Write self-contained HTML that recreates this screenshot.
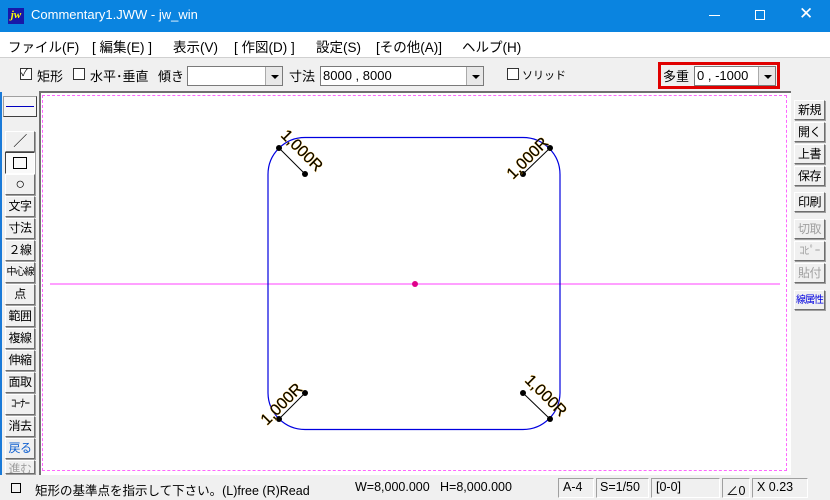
<!DOCTYPE html>
<html><head><meta charset="utf-8"><style>
*{margin:0;padding:0;box-sizing:border-box}
body{width:830px;height:500px;overflow:hidden;background:#f0f0f0;font-family:"Liberation Sans","Noto Sans CJK JP",sans-serif;position:relative;font-size:13px;color:#000;white-space:nowrap}
.abs{position:absolute}
#title{left:0;top:0;width:830px;height:32px;background:#0a84e0;color:#fff}
#menu{left:0;top:32px;width:830px;height:25px;background:#fff;font-size:13.5px}
#menu span{position:absolute;top:4px}
.btn{position:absolute;background:#f0f0f0;border:1px solid;border-color:#fff #6e6e6e #6e6e6e #fff;box-shadow:1px 1px 0 #a0a0a0;font-size:12px;text-align:center;line-height:19px;letter-spacing:-0.5px;overflow:hidden;white-space:nowrap}
.chk{position:absolute;width:12px;height:12px;border:1px solid #333;background:#fff}
.combo{position:absolute;height:20px;background:#fff;border:1px solid #7a7a7a;font-size:13px;line-height:18px;padding-left:2px}
.combo i{position:absolute;right:0;top:0;width:17px;height:18px;background:#e8e8e8;border-left:1px solid #aaa}
.combo i:after{content:"";position:absolute;left:5px;top:8px;border:4px solid transparent;border-top:4px solid #000}
#status span{position:absolute;top:5px;font-size:12.5px;white-space:nowrap}
.sbox{position:absolute;top:3px;height:20px;border:1px solid #bbb;border-color:#a0a0a0 #fff #fff #a0a0a0}
</style></head><body>
<div id="title" class="abs">
 <div class="abs" style="left:8px;top:8px;width:16px;height:16px;background:#1818a8;color:#ff0;font:italic bold 11px 'Liberation Serif',serif;line-height:15px;text-align:center">jw</div>
 <div class="abs" style="left:31px;top:7px;font-size:13px">Commentary1.JWW - jw_win</div>
 <div class="abs" style="left:709px;top:15px;width:11px;height:1px;background:#fff"></div>
 <div class="abs" style="left:755px;top:10px;width:10px;height:10px;border:1px solid #fff"></div>
 <div class="abs" style="left:799px;top:4px;font-size:17px;color:#fff">✕</div>
</div>
<div id="menu" class="abs">
 <span style="left:8px">ファイル(F)</span><span style="left:92px">[ 編集(E) ]</span><span style="left:173px">表示(V)</span><span style="left:234px">[ 作図(D) ]</span><span style="left:316px">設定(S)</span><span style="left:376px">[その他(A)]</span><span style="left:462px">ヘルプ(H)</span>
</div>
<div class="abs" style="left:0;top:57px;width:830px;height:1px;background:#d0d0d0"></div>
<div class="chk" style="left:20px;top:68px;font-size:10px;line-height:10px">✓</div>
<div class="abs" style="left:37px;top:66px">矩形</div>
<div class="chk" style="left:73px;top:68px"></div>
<div class="abs" style="left:90px;top:66px">水平･垂直</div>
<div class="abs" style="left:158px;top:66px">傾き</div>
<div class="combo" style="left:187px;top:66px;width:96px"><i></i></div>
<div class="abs" style="left:289px;top:66px">寸法</div>
<div class="combo" style="left:320px;top:66px;width:164px">8000 , 8000<i></i></div>
<div class="chk" style="left:507px;top:68px"></div>
<div class="abs" style="left:522px;top:67px;font-size:11px">ソリッド</div>
<div class="abs" style="left:658px;top:62px;width:122px;height:27px;border:3px solid #e00000"></div>
<div class="abs" style="left:663px;top:66px">多重</div>
<div class="combo" style="left:694px;top:66px;width:82px">0 , -1000<i></i></div>
<div class="abs" style="left:0;top:92px;width:2px;height:384px;background:#1a7ad8"></div>
<div class="abs" style="left:3px;top:96px;width:34px;height:21px;background:#f6f6f6;border:1px solid;border-color:#a0a0a0 #404040 #404040 #a0a0a0"><div class="abs" style="left:2px;top:9px;width:28px;height:1px;background:#0000c0"></div></div>
<div class="btn" style="left:5px;top:131px;width:30px;height:21px;font-size:14px">／</div>
<div class="btn" style="left:5px;top:152px;width:30px;height:22px;background:#fafafa;border-color:#404040 #fff #fff #404040"><div class="abs" style="left:7px;top:4px;width:14px;height:12px;border:1px solid #000"></div></div>
<div class="btn" style="left:5px;top:174px;width:30px;height:21px;font-size:16px">○</div>
<div class="btn" style="left:5px;top:196px;width:30px;height:21px">文字</div>
<div class="btn" style="left:5px;top:218px;width:30px;height:21px">寸法</div>
<div class="btn" style="left:5px;top:240px;width:30px;height:21px">２線</div>
<div class="btn" style="left:5px;top:262px;width:30px;height:21px;font-size:10px;letter-spacing:-1px">中心線</div>
<div class="btn" style="left:5px;top:284px;width:30px;height:21px">点</div>
<div class="btn" style="left:5px;top:306px;width:30px;height:21px">範囲</div>
<div class="btn" style="left:5px;top:328px;width:30px;height:21px">複線</div>
<div class="btn" style="left:5px;top:350px;width:30px;height:21px">伸縮</div>
<div class="btn" style="left:5px;top:372px;width:30px;height:21px">面取</div>
<div class="btn" style="left:5px;top:394px;width:30px;height:21px;font-size:11px;letter-spacing:-1px">ｺｰﾅｰ</div>
<div class="btn" style="left:5px;top:416px;width:30px;height:21px">消去</div>
<div class="btn" style="left:5px;top:438px;width:30px;height:21px;color:#1060d0">戻る</div>
<div class="btn" style="left:5px;top:460px;width:30px;height:14px;color:#a0a0a0;line-height:16px">進む</div>
<div class="abs" style="left:39px;top:91px;width:752px;height:384px;background:#fff;border-left:2px solid #707070;border-top:2px solid #707070"></div>
<div class="abs" style="left:42px;top:95px;width:745px;height:376px;border:1px dashed #ff66ff"></div>
<svg class="abs" style="left:0;top:0" width="830" height="500">
 <line x1="50" y1="284" x2="780" y2="284" stroke="#ff40ff" stroke-width="1"/>
 <circle cx="415" cy="284" r="3" fill="#e0008a"/>
 <path d="M305 137.5 H523 A37 37 0 0 1 560 174.5 V393 A37 37 0 0 1 523 429.5 H305 A37 37 0 0 1 268 393 V174.5 A37 37 0 0 1 305 137.5 Z" fill="none" stroke="#0000e0" stroke-width="1.2"/>
 <g stroke="#000" stroke-width="1">
  <line x1="279" y1="148" x2="305" y2="174"/><line x1="550" y1="148" x2="523" y2="174"/>
  <line x1="279" y1="419" x2="305" y2="393"/><line x1="550" y1="419" x2="523" y2="393"/>
 </g>
 <g fill="#000">
  <circle cx="279" cy="148" r="3"/><circle cx="305" cy="174" r="3"/><circle cx="550" cy="148" r="3"/><circle cx="523" cy="174" r="3"/>
  <circle cx="279" cy="419" r="3"/><circle cx="305" cy="393" r="3"/><circle cx="550" cy="419" r="3"/><circle cx="523" cy="393" r="3"/>
 </g>
 <g font-family="Liberation Sans, sans-serif" font-size="16" fill="#000" style="paint-order:stroke" stroke="#e8a000" stroke-width="0.5">
  <text transform="translate(280,136) rotate(45)">1,000R</text>
  <text transform="translate(513,180) rotate(-45)">1,000R</text>
  <text transform="translate(267,426) rotate(-45)">1,000R</text>
  <text transform="translate(524,381) rotate(45)">1,000R</text>
 </g>
</svg>
<div class="btn" style="left:794px;top:100px;width:31px;height:20px">新規</div>
<div class="btn" style="left:794px;top:122px;width:31px;height:20px">開く</div>
<div class="btn" style="left:794px;top:144px;width:31px;height:20px">上書</div>
<div class="btn" style="left:794px;top:166px;width:31px;height:20px">保存</div>
<div class="btn" style="left:794px;top:192px;width:31px;height:20px">印刷</div>
<div class="btn" style="left:794px;top:219px;width:31px;height:20px;color:#a0a0a0">切取</div>
<div class="btn" style="left:794px;top:241px;width:31px;height:20px;color:#a0a0a0;font-size:11px">ｺﾋﾟｰ</div>
<div class="btn" style="left:794px;top:263px;width:31px;height:20px;color:#a0a0a0">貼付</div>
<div class="btn" style="left:794px;top:290px;width:31px;height:20px;color:#0000e0;font-size:10px;letter-spacing:-1px">線属性</div>
<div id="status" class="abs" style="left:0;top:475px;width:830px;height:25px;background:#f0f0f0">
 <div class="abs" style="left:11px;top:8px;width:10px;height:10px;border:1px solid #000"></div>
 <span style="left:35px">矩形の基準点を指示して下さい。(L)free (R)Read</span>
 <span style="left:355px">W=8,000.000</span><span style="left:440px">H=8,000.000</span>
 <div class="sbox" style="left:558px;width:36px"></div><span style="left:563px">A-4</span>
 <div class="sbox" style="left:596px;width:53px"></div><span style="left:600px">S=1/50</span>
 <div class="sbox" style="left:651px;width:69px"></div><span style="left:656px">[0-0]</span>
 <div class="sbox" style="left:722px;width:28px"></div><span style="left:726px">∠0</span>
 <div class="sbox" style="left:752px;width:56px"></div><span style="left:757px">X 0.23</span>
</div>
</body></html>
